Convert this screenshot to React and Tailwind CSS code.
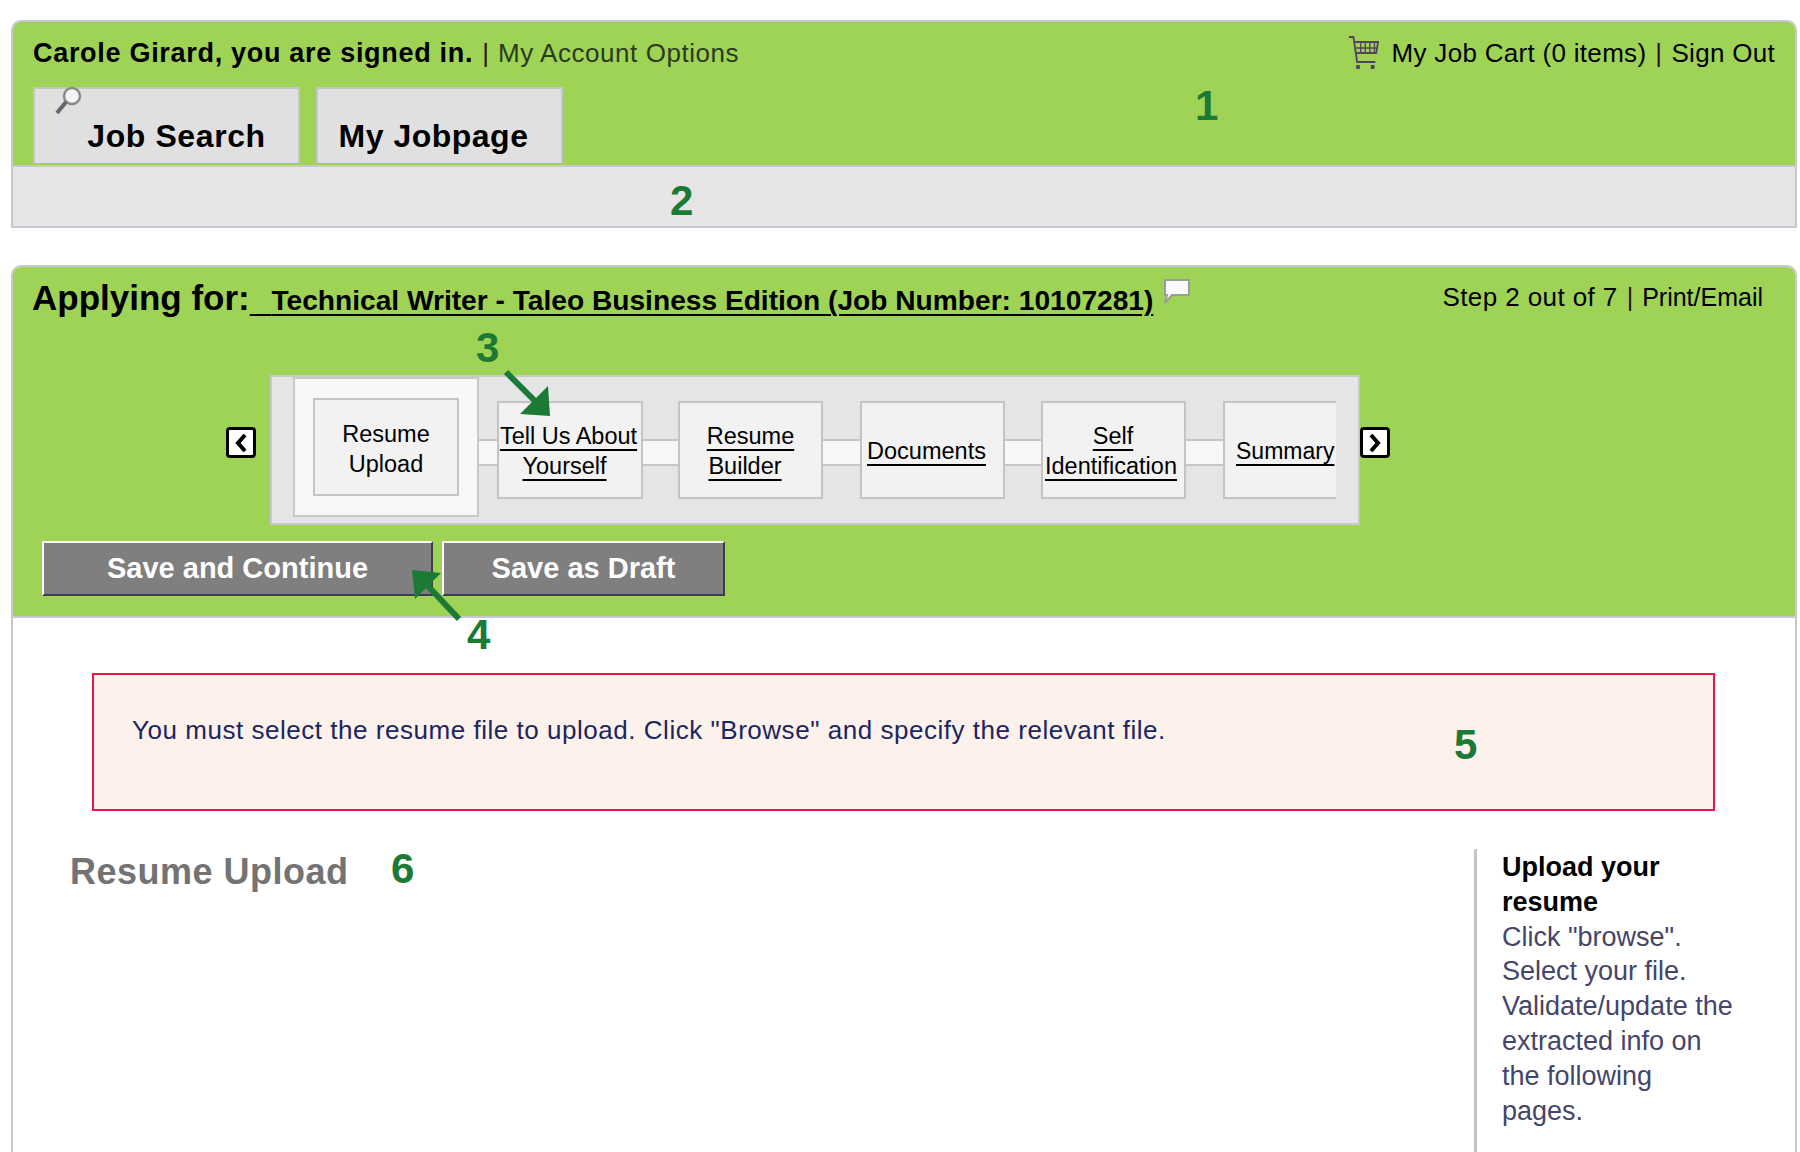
import React from "react";

const steps = [
  { lines: ["Tell Us About", "Yourself"], width: "w-[146px]", gap: "w-[35px]", pad: "pr-[3px]", first: "", second: "mr-[8px]" },
  { lines: ["Resume", "Builder"], width: "w-[145px]", gap: "w-[37px]", pad: "", first: "", second: "mr-[11px]" },
  { lines: ["Documents"], width: "w-[145px]", gap: "w-[36px]", pad: "pr-[12px]", first: "", second: "" },
  { lines: ["Self", "Identification"], width: "w-[145px]", gap: "w-[37px]", pad: "pr-[5px]", first: "ml-[4px]", second: "" },
];

const Connector = ({ className }) => (
  <div
    className={`mt-[62px] h-[27px] shrink-0 border-y-2 border-[#c6c6c6] bg-[#f7f7f7] ${className}`}
  />
);

const StepBox = ({ lines, width, pad, first, second }) => (
  <div
    className={`mt-[24px] flex h-[98px] shrink-0 flex-col items-center justify-center border-2 border-[#c4c4c4] bg-[#f2f2f2] pt-[2px] text-[23.5px] leading-[30px] text-black ${width} ${pad}`}
  >
    {lines.map((line, i) => (
      <span
        key={line}
        className={`whitespace-nowrap underline decoration-2 underline-offset-[5px] ${i === 0 ? first : second}`}
      >
        {line}
      </span>
    ))}
  </div>
);

const ScrollArrow = ({ left }) => (
  <button className="mt-[52px] flex h-[31px] w-[30px] shrink-0 items-center justify-center rounded-[4px] border-[3px] border-black bg-white">
    <svg width="14" height="20" viewBox="0 0 14 20">
      <path
        d={left ? "M11 2 L4 10 L11 18" : "M3 2 L10 10 L3 18"}
        fill="none"
        stroke="#000"
        strokeWidth="4"
      />
    </svg>
  </button>
);

const Divider = () => <span className="mx-[9px] text-[#2c1020]">|</span>;

const Num = ({ className, children }) => (
  <span
    className={`absolute text-[42px] font-bold leading-none text-[#1b7a33] ${className}`}
  >
    {children}
  </span>
);

export default function App() {
  return (
    <div className="relative flex h-[1152px] w-[1800px] flex-col overflow-hidden bg-white pb-0 pl-[11px] pr-[3px] pt-[20px] font-['Liberation_Sans',Arial,sans-serif] text-black">
      {/* Top nav */}
      <div className="rounded-tl-[10px] rounded-tr-[10px] border-2 border-[#c9c6d2]">
        <div className="flex h-[143px] flex-col rounded-t-[8px] bg-[#9fd356] px-[20px]">
          <div className="flex h-[65px] items-start justify-between pt-[14px] text-[26px] leading-[34px]">
            <div className="flex items-baseline whitespace-nowrap">
              <span className="text-[27px] font-bold tracking-[0.7px]">Carole Girard, you are signed in.</span>
              <Divider />
              <span className="tracking-[0.55px] text-[#2a3a1c]">My Account Options</span>
            </div>
            <div className="-mt-[1px] flex items-center whitespace-nowrap tracking-[0.3px]">
              <svg width="31" height="36" viewBox="0 0 34 36" preserveAspectRatio="none" className="mr-[13px]" fill="none" stroke="#54435f" strokeWidth="2">
                <path d="M1 2 H6 L10 27 H30" />
                <path d="M7 7 H33 L31 18 H9" />
                <path d="M14 7 V18 M19 7 V18 M24 7 V18 M29 7 V18 M9 13 H32" strokeWidth="1.5" />
                <rect x="9" y="30" width="4" height="4" fill="#54435f" stroke="none" />
                <rect x="25" y="30" width="4" height="4" fill="#54435f" stroke="none" />
              </svg>
              <span>My Job Cart (0 items)</span>
              <Divider />
              <span>Sign Out</span>
            </div>
          </div>
          <div className="flex gap-[16px]">
            <div className="relative flex h-[76px] w-[267px] items-end justify-center border-2 border-b-0 border-[#c6c3cf] bg-[#e0e0e0] pb-[7px] pl-[20px] text-[32px] font-bold leading-[40px] tracking-[0.6px]">
              <svg width="28" height="30" viewBox="0 0 28 30" className="absolute left-[19px] top-[-3px]" fill="none">
                <circle cx="18" cy="10" r="8" stroke="#8a8a8a" strokeWidth="2.5" fill="#f4f4f4" />
                <path d="M12 16 L3 27" stroke="#666" strokeWidth="4" />
              </svg>
              Job Search
            </div>
            <div className="flex h-[76px] w-[247px] items-end justify-center border-2 border-b-0 border-[#c6c3cf] bg-[#e0e0e0] pb-[7px] pr-[12px] text-[32px] font-bold leading-[40px] tracking-[0.5px]">
              My Jobpage
            </div>
          </div>
        </div>
        <div className="h-[61px] border-t-2 border-[#c9c6d2] bg-[#e6e6e6]" />
      </div>

      {/* Application card */}
      <div className="mt-[37px] flex flex-1 flex-col rounded-t-[10px] border-x-2 border-t-2 border-[#c9c6d2]">
        <div className="h-[351px] shrink-0 rounded-t-[8px] border-b-2 border-[#c9c6d2] bg-[#9fd356] pl-[19px] pr-[32px]">
          <div className="flex h-[108px] items-start justify-between pt-[11px]">
            <div className="flex items-baseline whitespace-nowrap">
              <span className="text-[35px] font-bold leading-[40px]">Applying for:</span>
              <span className="text-[28.15px] font-bold underline decoration-2 underline-offset-[4px]">
                <span className="tracking-[3px]">{"\u00a0\u00a0"}</span>
                Technical Writer - Taleo Business Edition (Job Number: 10107281)
              </span>
              <svg width="30" height="28" viewBox="0 0 30 28" className="ml-[9px] self-start">
                <path d="M3 2 H27 V17 H10 L3 25 L5 17 H3 Z" fill="#fafafa" stroke="#9b9b9b" strokeWidth="2" />
              </svg>
            </div>
            <div className="flex items-center whitespace-nowrap pt-[2px] text-[25px] leading-[34px]">
              <span className="text-[26px] tracking-[0.4px]">Step 2 out of 7</span>
              <Divider />
              <span>Print/Email</span>
            </div>
          </div>

          <div className="flex pl-[194px]">
            <ScrollArrow left />
            <div className="ml-[14px] flex h-[150px] w-[1090px] items-start border-2 border-[#c9c6d2] bg-[#e5e5e5] pl-[21px]">
              <div className="flex h-[140px] w-[186px] shrink-0 items-center justify-center border-2 border-[#c8c8c8] bg-[#f8f8f8]">
                <div className="flex h-[98px] w-[146px] flex-col items-center justify-center border-2 border-[#c4c4c4] bg-[#f2f2f2] pt-[4px] text-[23.5px] leading-[30px]">
                  <span>Resume</span>
                  <span>Upload</span>
                </div>
              </div>
              <Connector className="w-[18px]" />
              {steps.map((step) => (
                <React.Fragment key={step.lines[0]}>
                  <StepBox lines={step.lines} width={step.width} pad={step.pad} first={step.first} second={step.second} />
                  <Connector className={step.gap} />
                </React.Fragment>
              ))}
              <div className="mt-[24px] flex h-[98px] w-[113px] shrink-0 items-center overflow-hidden border-y-2 border-l-2 border-[#c4c4c4] bg-[#f2f2f2] pl-[11px] pt-[2px] text-[23px] leading-[30px]">
                <span className="whitespace-nowrap underline decoration-2 underline-offset-[5px]">Summary</span>
              </div>
            </div>
            <ScrollArrow />
          </div>

          <div className="mt-[16px] flex gap-[9px] pl-[10px]">
            <button className="h-[55px] w-[391px] border-2 border-b-[#3f3f4a] border-l-white border-r-[#3f3f4a] border-t-white bg-[#7f7f7f] text-[29px] font-bold text-white">
              Save and Continue
            </button>
            <button className="h-[55px] w-[283px] border-2 border-b-[#3f3f4a] border-l-white border-r-[#3f3f4a] border-t-white bg-[#7f7f7f] text-[29px] font-bold text-white">
              Save as Draft
            </button>
          </div>
        </div>

        <div className="flex flex-1 flex-col pl-[79px] pr-[80px] pt-[55px]">
          <div className="h-[138px] border-2 border-[#f0124a] bg-[#fdf1ec] pl-[38px] pt-[38px] text-[26px] leading-[34px] tracking-[0.53px] text-[#1a2660]">
            You must select the resume file to upload. Click "Browse" and specify the relevant file.
          </div>
          <div className="-ml-[22px] -mr-[61px] mt-[36px] flex flex-1 justify-between">
            <h1 className="pt-[3px] text-[36px] font-bold leading-[44px] tracking-[0.5px] text-[#737373]">Resume Upload</h1>
            <div className="mt-[2px] w-[302px] border-l-[3px] border-[#c4c4c4] pl-[25px] pt-[1px] text-[27px] leading-[34.8px] text-[#45456a]">
              <div className="font-bold text-black">Upload your</div>
              <div className="font-bold text-black">resume</div>
              <div>Click "browse".</div>
              <div>Select your file.</div>
              <div>Validate/update the</div>
              <div>extracted info on</div>
              <div>the following</div>
              <div>pages.</div>
            </div>
          </div>
        </div>
      </div>

      {/* Numbered callouts drawn over the page */}
      <Num className="left-[1195px] top-[85px]">1</Num>
      <Num className="left-[670px] top-[180px]">2</Num>
      <Num className="left-[476px] top-[327px]">3</Num>
      <Num className="left-[467px] top-[614px]">4</Num>
      <Num className="left-[1454px] top-[724px]">5</Num>
      <Num className="left-[391px] top-[848px]">6</Num>
      <svg width="60" height="60" viewBox="0 0 60 60" className="absolute left-[500px] top-[368px]">
        <path d="M6 4 L40 38" stroke="#1b7a33" strokeWidth="6" />
        <path d="M50 48 L48 18 L20 46 Z" fill="#1b7a33" />
      </svg>
      <svg width="60" height="60" viewBox="0 0 60 60" className="absolute left-[409px] top-[567px]">
        <path d="M50 52 L18 18" stroke="#1b7a33" strokeWidth="6" />
        <path d="M3 3 L32 6 L6 32 Z" fill="#1b7a33" />
      </svg>
    </div>
  );
}
